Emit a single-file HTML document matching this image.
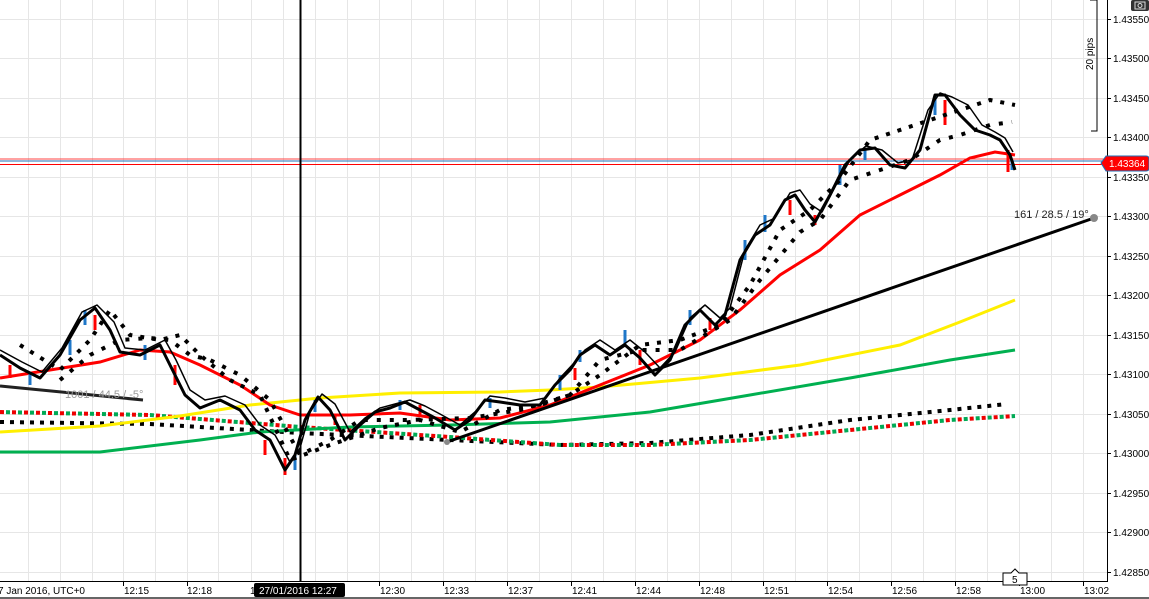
<!DOCTYPE html>
<html><head><meta charset="utf-8"><style>
html,body{margin:0;padding:0;background:#fff;}
svg{display:block;font-family:"Liberation Sans",sans-serif;}
</style></head><body>
<svg width="1149" height="599" viewBox="0 0 1149 599" xmlns="http://www.w3.org/2000/svg">
<rect width="1149" height="599" fill="#fff"/>
<g stroke="#e6e6e6" stroke-width="1">
<line x1="28.5" y1="0" x2="28.5" y2="582"/><line x1="60.5" y1="0" x2="60.5" y2="582"/><line x1="92.5" y1="0" x2="92.5" y2="582"/><line x1="123.5" y1="0" x2="123.5" y2="582"/><line x1="155.5" y1="0" x2="155.5" y2="582"/><line x1="187.5" y1="0" x2="187.5" y2="582"/><line x1="218.5" y1="0" x2="218.5" y2="582"/><line x1="251.5" y1="0" x2="251.5" y2="582"/><line x1="283.5" y1="0" x2="283.5" y2="582"/><line x1="315.5" y1="0" x2="315.5" y2="582"/><line x1="347.5" y1="0" x2="347.5" y2="582"/><line x1="379.5" y1="0" x2="379.5" y2="582"/><line x1="411.5" y1="0" x2="411.5" y2="582"/><line x1="443.5" y1="0" x2="443.5" y2="582"/><line x1="475.5" y1="0" x2="475.5" y2="582"/><line x1="507.5" y1="0" x2="507.5" y2="582"/><line x1="539.5" y1="0" x2="539.5" y2="582"/><line x1="571.5" y1="0" x2="571.5" y2="582"/><line x1="603.5" y1="0" x2="603.5" y2="582"/><line x1="635.5" y1="0" x2="635.5" y2="582"/><line x1="667.5" y1="0" x2="667.5" y2="582"/><line x1="699.5" y1="0" x2="699.5" y2="582"/><line x1="731.5" y1="0" x2="731.5" y2="582"/><line x1="763.5" y1="0" x2="763.5" y2="582"/><line x1="795.5" y1="0" x2="795.5" y2="582"/><line x1="827.5" y1="0" x2="827.5" y2="582"/><line x1="859.5" y1="0" x2="859.5" y2="582"/><line x1="891.5" y1="0" x2="891.5" y2="582"/><line x1="923.5" y1="0" x2="923.5" y2="582"/><line x1="955.5" y1="0" x2="955.5" y2="582"/><line x1="987.5" y1="0" x2="987.5" y2="582"/><line x1="1019.5" y1="0" x2="1019.5" y2="582"/><line x1="1051.5" y1="0" x2="1051.5" y2="582"/><line x1="1083.5" y1="0" x2="1083.5" y2="582"/>
<line x1="0" y1="19.5" x2="1107" y2="19.5"/><line x1="0" y1="58.5" x2="1107" y2="58.5"/><line x1="0" y1="98.5" x2="1107" y2="98.5"/><line x1="0" y1="137.5" x2="1107" y2="137.5"/><line x1="0" y1="177.5" x2="1107" y2="177.5"/><line x1="0" y1="216.5" x2="1107" y2="216.5"/><line x1="0" y1="256.5" x2="1107" y2="256.5"/><line x1="0" y1="295.5" x2="1107" y2="295.5"/><line x1="0" y1="335.5" x2="1107" y2="335.5"/><line x1="0" y1="374.5" x2="1107" y2="374.5"/><line x1="0" y1="414.5" x2="1107" y2="414.5"/><line x1="0" y1="453.5" x2="1107" y2="453.5"/><line x1="0" y1="493.5" x2="1107" y2="493.5"/><line x1="0" y1="532.5" x2="1107" y2="532.5"/><line x1="0" y1="572.5" x2="1107" y2="572.5"/>
</g>
<!-- price lines -->
<line x1="0" y1="161" x2="1107" y2="161" stroke="#1f6fb5" stroke-width="1"/>
<line x1="0" y1="164.5" x2="1107" y2="164.5" stroke="#f00" stroke-width="1"/>
<line x1="0" y1="159" x2="1107" y2="159" stroke="#f44" stroke-width="1"/>
<!-- lower dotted bands -->
<polyline fill="none" stroke="#000" stroke-width="4" stroke-dasharray="4 6" points="0,422 150,424 300,433 450,440 560,445 650,443 750,435 850,420 950,410 1007,404"/>
<polyline fill="none" stroke="#e00" stroke-width="4" stroke-dasharray="4 8" points="0,412 150,415 300,427 450,437 560,445 650,445 750,440 850,430 950,420 1015,416"/>
<polyline fill="none" stroke="#0a5" stroke-width="4" stroke-dasharray="4 8" stroke-dashoffset="6" points="0,412 150,415 300,427 450,437 560,445 650,445 750,440 850,430 950,420 1015,416"/>
<!-- MAs -->
<polyline fill="none" stroke="#00b050" stroke-width="3" points="0,452 100,452 200,440 260,432 350,427 450,425 550,422 650,412 750,395 850,378 950,360 1015,350"/>
<polyline fill="none" stroke="#ffef00" stroke-width="3" points="0,432 100,426 180,416 250,405 320,398 400,393 500,392 550,390 600,387 700,378 800,365 900,345 960,322 1015,300"/>
<polyline fill="none" stroke="#f00" stroke-width="3" points="0,378 50,370 100,362 140,350 170,352 200,365 240,385 270,405 300,415 350,415 400,413 450,420 500,418 550,405 600,385 650,365 700,340 740,310 780,275 820,250 860,215 900,195 940,175 970,158 995,152 1015,155"/>
<!-- trendlines -->
<line x1="0" y1="386" x2="143" y2="400" stroke="#222" stroke-width="3"/>
<text x="65" y="398" font-size="11" fill="#999">1001 / 44.5 / -5°</text>
<line x1="447" y1="442" x2="1094" y2="218" stroke="#000" stroke-width="3"/>
<circle cx="447" cy="442" r="3" fill="#888"/><circle cx="1094" cy="218" r="4" fill="#888"/>
<text x="1014" y="218" font-size="11" fill="#222">161 / 28.5 / 19°</text>
<!-- candles -->
<g stroke-width="3">
<g stroke="#1f77c8"><line x1="30" y1="372" x2="30" y2="385"/><line x1="70" y1="340" x2="70" y2="355"/><line x1="85" y1="310" x2="85" y2="325"/><line x1="145" y1="345" x2="145" y2="360"/><line x1="295" y1="455" x2="295" y2="470"/><line x1="315" y1="400" x2="315" y2="412"/><line x1="400" y1="400" x2="400" y2="410"/><line x1="490" y1="398" x2="490" y2="408"/><line x1="560" y1="375" x2="560" y2="390"/><line x1="580" y1="350" x2="580" y2="362"/><line x1="625" y1="330" x2="625" y2="345"/><line x1="690" y1="310" x2="690" y2="325"/><line x1="745" y1="240" x2="745" y2="260"/><line x1="765" y1="215" x2="765" y2="232"/><line x1="840" y1="165" x2="840" y2="185"/><line x1="865" y1="148" x2="865" y2="160"/><line x1="935" y1="95" x2="935" y2="115"/><line x1="1012" y1="160" x2="1012" y2="170"/></g>
<g stroke="#f00"><line x1="10" y1="365" x2="10" y2="378"/><line x1="95" y1="315" x2="95" y2="330"/><line x1="175" y1="365" x2="175" y2="385"/><line x1="265" y1="440" x2="265" y2="455"/><line x1="285" y1="458" x2="285" y2="475"/><line x1="335" y1="415" x2="335" y2="425"/><line x1="420" y1="405" x2="420" y2="415"/><line x1="575" y1="368" x2="575" y2="380"/><line x1="640" y1="350" x2="640" y2="365"/><line x1="710" y1="318" x2="710" y2="330"/><line x1="790" y1="200" x2="790" y2="215"/><line x1="815" y1="215" x2="815" y2="225"/><line x1="945" y1="100" x2="945" y2="125"/><line x1="1008" y1="150" x2="1008" y2="172"/></g>
</g>
<!-- dotted psar-like -->
<polyline fill="none" stroke="#000" stroke-width="4" stroke-dasharray="4 8" points="20,345 60,370 90,340 110,310 130,335 160,340 180,335 200,355 230,380 260,395 290,460 330,445 380,428 420,420 460,432 500,410 540,405 570,395 600,375 640,345 680,340 720,325 750,285 780,230 810,210 840,180 870,140 900,130 930,120 960,110 990,100 1015,105"/>
<polyline fill="none" stroke="#000" stroke-width="4" stroke-dasharray="4 9" points="60,380 90,355 120,340 150,338 170,340 190,355 210,360 240,375 270,400 300,455 330,440 360,420 410,420 470,418 520,410 570,395 600,360 640,350 680,350 730,320 760,280 800,232 820,220 850,180 880,170 910,160 940,140 960,135 990,125 1012,122"/>
<!-- main lines -->
<polyline fill="none" stroke="#000" stroke-width="3" stroke-linejoin="round" points="0,355 20,368 40,378 60,355 80,320 95,308 110,330 120,352 140,355 160,345 170,365 185,395 200,408 220,400 240,410 255,430 270,440 285,470 295,455 305,420 318,397 330,410 345,440 360,425 375,412 390,408 405,402 420,410 435,418 455,430 470,420 485,400 500,402 520,405 540,405 555,385 570,370 580,355 595,345 610,355 625,345 640,358 655,375 670,360 685,325 700,310 715,325 725,315 740,260 755,235 770,225 785,200 795,195 805,210 815,222 830,195 845,165 860,150 875,148 890,165 905,168 920,150 935,95 945,95 960,115 975,130 990,135 1000,140 1010,155 1015,170"/>
<polyline fill="none" stroke="#000" stroke-width="1.5" stroke-linejoin="round" points="0,350 22,362 42,372 62,348 82,312 97,305 114,322 125,348 145,350 165,340 176,360 190,390 205,400 225,396 245,405 260,425 275,435 290,462 300,448 310,412 322,394 335,404 350,432 365,418 380,408 395,404 410,400 425,406 440,414 460,425 475,412 490,396 505,398 525,402 545,398 560,378 575,362 585,350 600,340 615,350 630,340 645,352 660,368 675,352 690,318 705,305 720,318 730,308 745,250 760,225 775,218 790,193 800,190 810,204 822,212 836,185 850,160 866,146 882,150 898,163 912,160 928,110 940,93 952,97 968,105 982,125 995,132 1005,138 1013,152"/>
<!-- crosshair -->
<line x1="300.5" y1="0" x2="300.5" y2="582" stroke="#000" stroke-width="2"/>
<!-- axes -->
<line x1="1107.5" y1="0" x2="1107.5" y2="582" stroke="#000" stroke-width="1"/>
<line x1="0" y1="581.5" x2="1107" y2="581.5" stroke="#000" stroke-width="1"/>
<rect x="0" y="597" width="1149" height="2" fill="#666"/>
<g font-size="10" fill="#000">
<text x="1113" y="23">1.43550</text><text x="1113" y="62">1.43500</text><text x="1113" y="102">1.43450</text><text x="1113" y="141">1.43400</text><text x="1113" y="181">1.43350</text><text x="1113" y="220">1.43300</text><text x="1113" y="260">1.43250</text><text x="1113" y="299">1.43200</text><text x="1113" y="339">1.43150</text><text x="1113" y="378">1.43100</text><text x="1113" y="418">1.43050</text><text x="1113" y="457">1.43000</text><text x="1113" y="497">1.42950</text><text x="1113" y="536">1.42900</text><text x="1113" y="576">1.42850</text>
</g>
<g stroke="#000"><line x1="1107" y1="19.5" x2="1111" y2="19.5"/><line x1="1107" y1="58.5" x2="1111" y2="58.5"/><line x1="1107" y1="98.5" x2="1111" y2="98.5"/><line x1="1107" y1="137.5" x2="1111" y2="137.5"/><line x1="1107" y1="177.5" x2="1111" y2="177.5"/><line x1="1107" y1="216.5" x2="1111" y2="216.5"/><line x1="1107" y1="256.5" x2="1111" y2="256.5"/><line x1="1107" y1="295.5" x2="1111" y2="295.5"/><line x1="1107" y1="335.5" x2="1111" y2="335.5"/><line x1="1107" y1="374.5" x2="1111" y2="374.5"/><line x1="1107" y1="414.5" x2="1111" y2="414.5"/><line x1="1107" y1="453.5" x2="1111" y2="453.5"/><line x1="1107" y1="493.5" x2="1111" y2="493.5"/><line x1="1107" y1="532.5" x2="1111" y2="532.5"/><line x1="1107" y1="572.5" x2="1111" y2="572.5"/></g>
<g font-size="10" fill="#000">
<text x="-2" y="594">7 Jan 2016, UTC+0</text><text x="124" y="594">12:15</text><text x="187" y="594">12:18</text><text x="250" y="594">1</text><text x="380" y="594">12:30</text><text x="444" y="594">12:33</text><text x="508" y="594">12:37</text><text x="572" y="594">12:41</text><text x="636" y="594">12:44</text><text x="700" y="594">12:48</text><text x="764" y="594">12:51</text><text x="828" y="594">12:54</text><text x="892" y="594">12:56</text><text x="956" y="594">12:58</text><text x="1020" y="594">13:00</text><text x="1084" y="594">13:02</text>
</g>
<g stroke="#000"><line x1="123.5" y1="582" x2="123.5" y2="586"/><line x1="187.5" y1="582" x2="187.5" y2="586"/><line x1="379.5" y1="582" x2="379.5" y2="586"/><line x1="443.5" y1="582" x2="443.5" y2="586"/><line x1="507.5" y1="582" x2="507.5" y2="586"/><line x1="571.5" y1="582" x2="571.5" y2="586"/><line x1="635.5" y1="582" x2="635.5" y2="586"/><line x1="699.5" y1="582" x2="699.5" y2="586"/><line x1="763.5" y1="582" x2="763.5" y2="586"/><line x1="827.5" y1="582" x2="827.5" y2="586"/><line x1="891.5" y1="582" x2="891.5" y2="586"/><line x1="955.5" y1="582" x2="955.5" y2="586"/><line x1="1019.5" y1="582" x2="1019.5" y2="586"/><line x1="1083.5" y1="582" x2="1083.5" y2="586"/></g>
<rect x="254" y="583" width="91" height="14" rx="2" fill="#000"/>
<text x="259" y="594" font-size="10" fill="#fff">27/01/2016 12:27</text>
<!-- 20 pips bracket -->
<polyline points="1090,0 1097,0 1097,131 1091,131" fill="none" stroke="#000" stroke-width="1"/>
<text transform="translate(1093,70) rotate(-90)" font-size="10" fill="#000">20 pips</text>
<!-- camera -->
<rect x="1131" y="0" width="18" height="11" rx="2" fill="#333"/>
<rect x="1135" y="2" width="10" height="7" fill="none" stroke="#ddd" stroke-width="1"/>
<circle cx="1140" cy="5.5" r="2" fill="none" stroke="#ddd"/>
<!-- price badge -->
<path d="M1101,163 L1106,156 H1146 Q1149,156 1149,159 V168 Q1149,171 1146,171 H1106 Z" fill="#f00" stroke="#1f6fb5" stroke-width="1"/>
<text x="1109" y="167" font-size="10" fill="#fff">1.43364</text>
<!-- 5 box -->
<path d="M1003,573 H1011 L1015,569 L1019,573 H1027 V585 H1003 Z" fill="#fff" stroke="#000" stroke-width="1"/>
<text x="1012" y="583" font-size="10" fill="#000">5</text>
</svg>
</body></html>
